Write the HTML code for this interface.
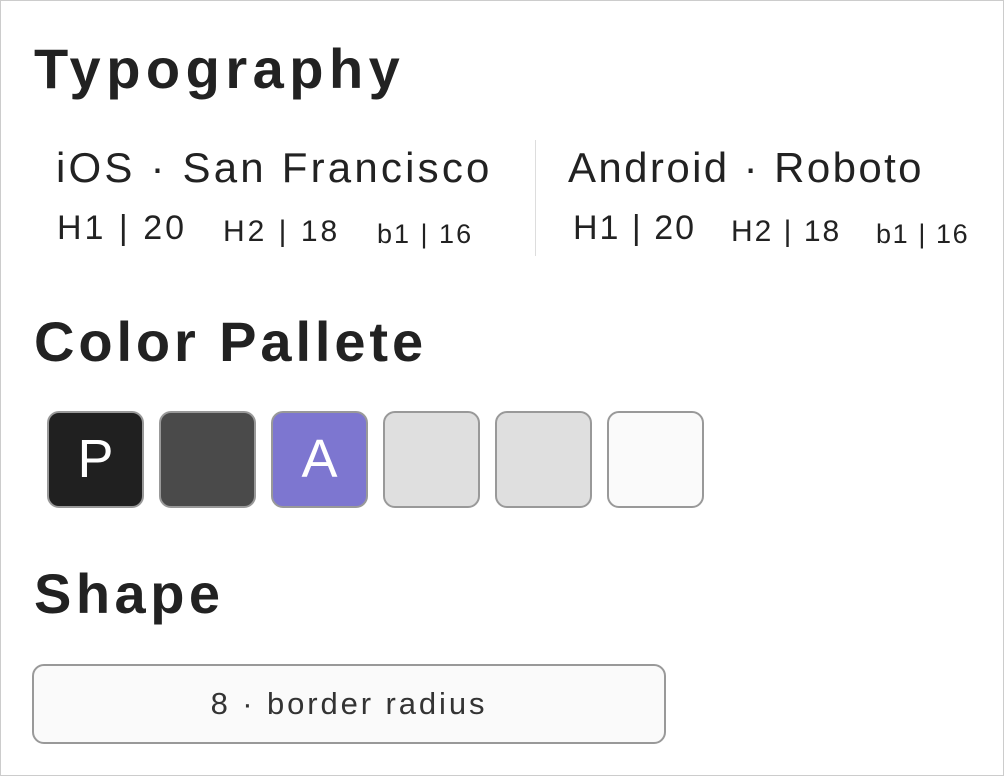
<!DOCTYPE html>
<html><head><style>
html,body{margin:0;padding:0}
body{width:1004px;height:776px;overflow:hidden;background:#fff;font-family:"Liberation Sans",sans-serif;color:#222;position:relative}
.frame{position:absolute;left:0;top:0;width:1002px;height:774px;border:1px solid #ccc}
.a{position:absolute;white-space:nowrap}
h1{position:absolute;margin:0;font-size:56px;font-weight:bold;left:34px;white-space:nowrap}
.sw{position:absolute;top:411px;width:93px;height:93px;border:2px solid #999;border-radius:12px;color:#fff;font-size:54px;text-align:center;line-height:93px}
</style></head><body>
<div class="frame"></div>
<h1 style="top:36px;letter-spacing:5.5px">Typography</h1>
<div class="a" style="left:56px;top:144px;font-size:42px;letter-spacing:3.2px">iOS · San Francisco</div>
<div class="a" style="left:57px;top:209px;font-size:34px;letter-spacing:3px">H1 | 20</div>
<div class="a" style="left:223px;top:215px;font-size:30px;letter-spacing:3px">H2 | 18</div>
<div class="a" style="left:377px;top:219px;font-size:27px;letter-spacing:2px">b1 | 16</div>
<div class="a" style="left:535px;top:140px;width:1px;height:116px;background:#ddd"></div>
<div class="a" style="left:568px;top:144px;font-size:42px;letter-spacing:2.4px">Android · Roboto</div>
<div class="a" style="left:573px;top:209px;font-size:34px;letter-spacing:2px">H1 | 20</div>
<div class="a" style="left:731px;top:215px;font-size:30px;letter-spacing:2px">H2 | 18</div>
<div class="a" style="left:876px;top:219px;font-size:27px;letter-spacing:1.6px">b1 | 16</div>
<h1 style="top:309px;letter-spacing:3.9px">Color Pallete</h1>
<div class="sw" style="left:47px;background:#202020">P</div>
<div class="sw" style="left:159px;background:#4a4a4a"></div>
<div class="sw" style="left:271px;background:#7d76d0">A</div>
<div class="sw" style="left:383px;background:#dfdfdf"></div>
<div class="sw" style="left:495px;background:#dfdfdf"></div>
<div class="sw" style="left:607px;background:#fafafa"></div>
<h1 style="top:561px;letter-spacing:4.5px">Shape</h1>
<div class="a" style="left:32px;top:664px;width:630px;height:76px;border:2px solid #999;border-radius:12px;background:#fafafa;font-size:31px;text-align:center;line-height:76px;color:#333;letter-spacing:2.9px">8 · border radius</div>
</body></html>
